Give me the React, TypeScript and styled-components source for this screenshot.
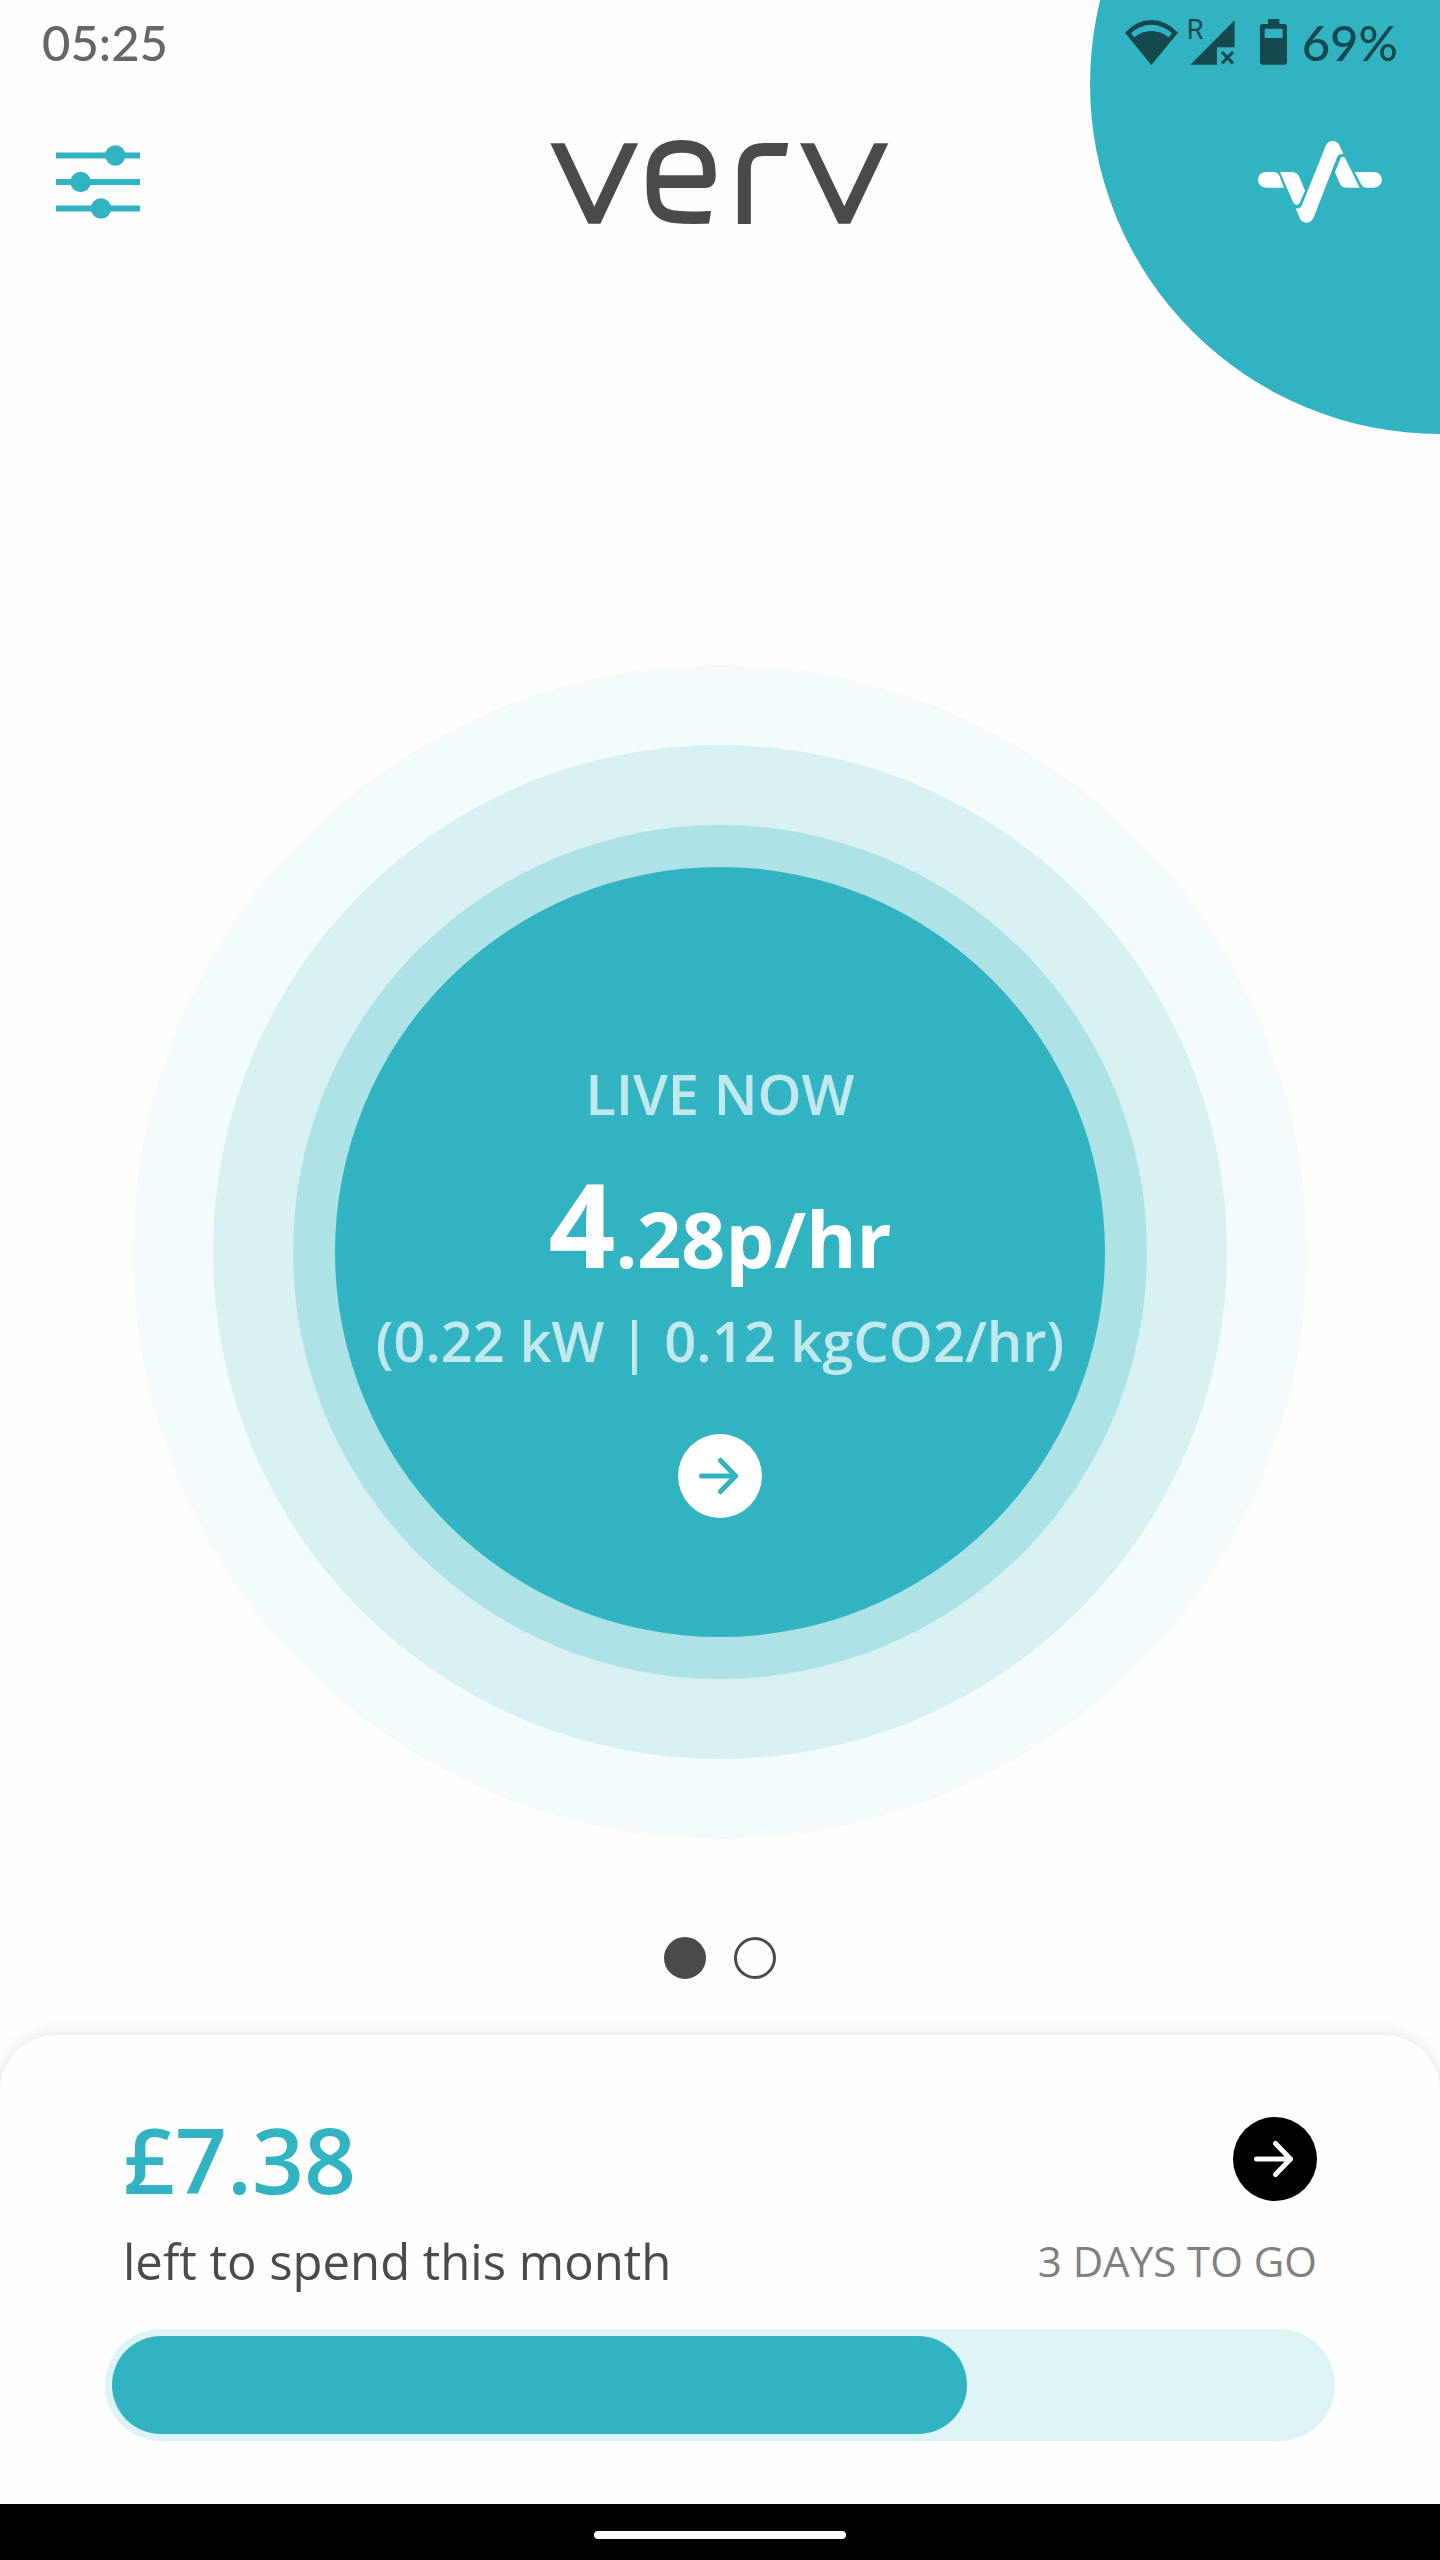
import React, { useState } from "react";
import styled, { createGlobalStyle } from "styled-components";

const teal = "#31b3c2";
const charcoal = "#4a4a4a";
const statusInk = "#15494d";

const GlobalStyle = createGlobalStyle`
  * { box-sizing: border-box; }
  body { margin: 0; background: #fefefe; font-family: "Open Sans", "Noto Sans", sans-serif; }
  button { border: 0; padding: 0; background: none; font: inherit; cursor: pointer; }
  p, h1 { margin: 0; }
  svg { display: block; }
`;

const Screen = styled.div`
  position: relative;
  display: flex;
  flex-direction: column;
  min-height: 100vh;
  overflow: hidden;
`;

const CornerDisc = styled.div`
  position: absolute;
  top: -266px;
  right: -350px;
  width: 700px;
  height: 700px;
  border-radius: 50%;
  background: ${teal};
`;

const StatusBar = styled.div`
  position: relative;
  display: flex;
  align-items: center;
  justify-content: space-between;
  padding: 14px 42px;
  font: 500 49px/56px "Lato Medium", Lato, "Open Sans", sans-serif;
`;

const Clock = styled.time`
  color: #666;
`;

const StatusIcons = styled.div`
  display: flex;
  align-items: center;
  color: ${statusInk};
`;

const Signal = styled.span`
  position: relative;
  margin: 0 25px 0 12px;
`;

const Roaming = styled.span`
  position: absolute;
  top: -6px;
  left: -3px;
  font: 400 27px/32px "Liberation Sans Narrow", Roboto, sans-serif;
`;

const BatteryLevel = styled.span`
  margin-left: 15px;
`;

const Header = styled.header`
  position: relative;
  display: grid;
  grid-template-columns: 1fr auto 1fr;
  align-items: center;
  height: 196px;
  padding: 0 58px 0 56px;
`;

const HeaderButton = styled.button<{ $end?: boolean }>`
  justify-self: ${(p) => (p.$end ? "end" : "start")};
`;

const Main = styled.main`
  flex: 1;
  display: flex;
  flex-direction: column;
  align-items: center;
  justify-content: flex-end;
  gap: 98px;
  padding: 48px 0 56px;
`;

const Ring = styled.div<{ $color: string; $width: number }>`
  padding: ${(p) => p.$width}px;
  border-radius: 50%;
  background: ${(p) => p.$color};
`;

const LiveDisc = styled.section`
  display: flex;
  flex-direction: column;
  align-items: center;
  width: 770px;
  height: 770px;
  padding-top: 188px;
  border-radius: 50%;
  background: ${teal};
  color: #fff;
  white-space: nowrap;
`;

const LiveLabel = styled.p`
  font-size: 56px;
  line-height: 76px;
  font-weight: 600;
  color: #c1e8ed;
`;

const LivePrice = styled.p`
  margin: 24px 0 11px;
  font-size: 117px;
  line-height: 136px;
  font-weight: 700;
`;

const PriceFraction = styled.span`
  font-size: 77px;
  line-height: 77px;
`;

const RoundButton = styled.button<{ $bg: string; $ink: string }>`
  display: grid;
  place-items: center;
  width: 84px;
  height: 84px;
  border-radius: 50%;
  background: ${(p) => p.$bg};
  color: ${(p) => p.$ink};
`;

const LiveAction = styled.div`
  margin-top: 56px;
`;

const Pager = styled.nav`
  display: flex;
  gap: 28px;
`;

const Dot = styled.button<{ $active: boolean }>`
  width: 42px;
  height: 42px;
  border: 3px solid ${charcoal};
  border-radius: 50%;
  background: ${(p) => (p.$active ? charcoal : "transparent")};
`;

const BudgetCard = styled.section`
  padding: 82px 105px 63px;
  border-radius: 56px 56px 0 0;
  background: #fefefe;
  box-shadow: 0 0 16px rgba(0, 0, 0, 0.12);
`;

const CardRow = styled.div`
  display: flex;
  align-items: center;
  justify-content: space-between;
  padding: 0 18px;
`;

const Amount = styled.p`
  font-size: 91px;
  line-height: 84px;
  font-weight: 600;
  color: ${teal};
`;

const CaptionRow = styled(CardRow)`
  margin: 30px 0 38px;
  line-height: 60px;
`;

const Caption = styled.p`
  font-size: 49px;
  color: ${charcoal};
`;

const DaysLeft = styled.p`
  font-size: 42px;
  color: #808080;
`;

const Track = styled.div`
  height: 112px;
  padding: 7px;
  border-radius: 56px;
  background: #ddf3f6;
`;

const Fill = styled.div`
  height: 100%;
  border-radius: 49px;
  background: ${teal};
`;

const SystemNav = styled.div`
  display: flex;
  align-items: center;
  justify-content: center;
  height: 56px;
  padding-top: 6px;
  background: #000;
`;

const HomeHandle = styled.button`
  width: 252px;
  height: 8px;
  border-radius: 4px;
  background: #fff;
`;

const WifiIcon = () => (
  <svg width="53" height="45" viewBox="168 57 159 135" fill="currentColor" aria-hidden="true">
    <path
      fillRule="evenodd"
      d="M168 95Q203 57 247 57Q291 57 327 95L247 192ZM186 97L196 109Q220 90 247 90Q275 90 299 109L309 97Q281 71 247 71Q213 71 186 97Z"
    />
  </svg>
);

const SignalIcon = () => (
  <svg width="45" height="45" viewBox="361 57 135 135" fill="currentColor" aria-hidden="true">
    <path d="M362 191L495 58V139H442V191Z" />
    <path d="M457 153L490 187M490 153L457 187" stroke="currentColor" strokeWidth="9" />
  </svg>
);

const BatteryIcon = () => (
  <svg width="27" height="46" viewBox="570 57 81 138" fill="currentColor" aria-hidden="true">
    <path
      fillRule="evenodd"
      d="M594 57H628V72H643Q651 72 651 80V187Q651 194 643 194H578Q570 194 570 187V80Q570 72 578 72H594ZM584 86V114H638V86Z"
    />
  </svg>
);

const SlidersIcon = () => (
  <svg width="84" height="75" viewBox="0 0 84 75" fill={teal} aria-hidden="true">
    <path d="M0 7.500H84V13.500H0ZM0 34H84V40H0ZM0 60.500H84V66.500H0Z" />
    <circle cx="59.300" cy="10.500" r="10.200" />
    <circle cx="24.600" cy="37" r="10.200" />
    <circle cx="45" cy="63.500" r="10.200" />
  </svg>
);

const VervLogo = () => (
  <svg width="339" height="84" viewBox="60 59 1017 252" fill="none" stroke={charcoal} role="img" aria-label="verv">
    <defs>
      <clipPath id="logo-v">
        <rect x="60" y="69" width="1017" height="241" />
      </clipPath>
      <clipPath id="logo-e">
        <path d="M340 50H570V240H548L537 312H340Z" />
      </clipPath>
      <clipPath id="logo-r">
        <path d="M620 68H775L768 108V312H620Z" />
      </clipPath>
    </defs>
    <g clipPath="url(#logo-v)" strokeWidth="38.500" strokeMiterlimit="8">
      <path d="M73.100 49L193 304L312.400 49" />
      <path d="M822 49L943 303L1063 49" />
    </g>
    <g clipPath="url(#logo-e)" strokeWidth="38">
      <path
        d="M560 290C520 292 440 295 412 285C378 273 369 245 369 200V166C369 108 393 78 456 78C516 78 538 105 538 158V170Q538 184 526 184H369"
      />
    </g>
    <g clipPath="url(#logo-r)" strokeWidth="39">
      <path d="M643 315V150C643 108 662 87.500 702 87.500H790" />
    </g>
  </svg>
);

const PulseIcon = () => (
  <svg width="124" height="82" viewBox="564 420 372 246" fill="#fff" aria-hidden="true">
    <path d="M587.500 513A23.500 23.500 0 0 0 587.500 560H642L629 526Q624 513 610 513Z" />
    <path d="M630 513H664Q681 513 688 528L705 569L690 604Q686 613 679 612Q673 612 669 603Z" />
    <path d="M677 622Q691 624 695 614L767 435Q773 420 788 420Q802 420 809 434L820 459Q806 457 802 467L731 649Q724 665 710 665Q695 665 689 651Z" />
    <path d="M795 514L811 473Q814 467 819 467Q824 467 827 474L869 560H831Q815 560 808 545Z" />
    <path d="M854 513H912A23.500 23.500 0 0 1 912 560H888Q879 560 874 551Z" />
  </svg>
);

const ArrowIcon = () => (
  <svg
    width="84"
    height="84"
    viewBox="0 0 84 84"
    fill="none"
    stroke="currentColor"
    strokeWidth="5"
    strokeLinecap="round"
    strokeLinejoin="round"
    aria-hidden="true"
  >
    <path d="M23.500 42H57.500M42.500 26.500L57.500 42L42.500 57.500" />
  </svg>
);

const pages = ["Live", "History"];
const spentPercent = 70.3;

export default function App() {
  const [page, setPage] = useState(0);

  return (
    <>
      <GlobalStyle />
      <Screen>
        <CornerDisc />
        <StatusBar>
          <Clock>05:25</Clock>
          <StatusIcons>
            <WifiIcon />
            <Signal>
              <Roaming>R</Roaming>
              <SignalIcon />
            </Signal>
            <BatteryIcon />
            <BatteryLevel>69%</BatteryLevel>
          </StatusIcons>
        </StatusBar>
        <Header>
          <HeaderButton aria-label="Settings">
            <SlidersIcon />
          </HeaderButton>
          <VervLogo />
          <HeaderButton $end aria-label="Activity">
            <PulseIcon />
          </HeaderButton>
        </Header>
        <Main>
          <Ring $color="#f3fbfd" $width={80}>
            <Ring $color="#d7f0f2" $width={80}>
              <Ring $color="#ade3e6" $width={42}>
                <LiveDisc>
                  <LiveLabel>LIVE NOW</LiveLabel>
                  <LivePrice>
                    4<PriceFraction>.28p/hr</PriceFraction>
                  </LivePrice>
                  <LiveLabel>(0.22 kW | 0.12 kgCO2/hr)</LiveLabel>
                  <LiveAction>
                    <RoundButton $bg="#fff" $ink={teal} aria-label="Live details">
                      <ArrowIcon />
                    </RoundButton>
                  </LiveAction>
                </LiveDisc>
              </Ring>
            </Ring>
          </Ring>
          <Pager aria-label="Pages">
            {pages.map((name, i) => (
              <Dot key={name} $active={i === page} aria-label={name} onClick={() => setPage(i)} />
            ))}
          </Pager>
        </Main>
        <BudgetCard>
          <CardRow>
            <Amount>£7.38</Amount>
            <RoundButton $bg="#000" $ink="#fff" aria-label="Budget details">
              <ArrowIcon />
            </RoundButton>
          </CardRow>
          <CaptionRow>
            <Caption>left to spend this month</Caption>
            <DaysLeft>3 DAYS TO GO</DaysLeft>
          </CaptionRow>
          <Track role="progressbar" aria-label="Budget used" aria-valuenow={spentPercent} aria-valuemin={0} aria-valuemax={100}>
            <Fill style={{ width: `${spentPercent}%` }} />
          </Track>
        </BudgetCard>
        <SystemNav>
          <HomeHandle aria-label="Home" />
        </SystemNav>
      </Screen>
    </>
  );
}
